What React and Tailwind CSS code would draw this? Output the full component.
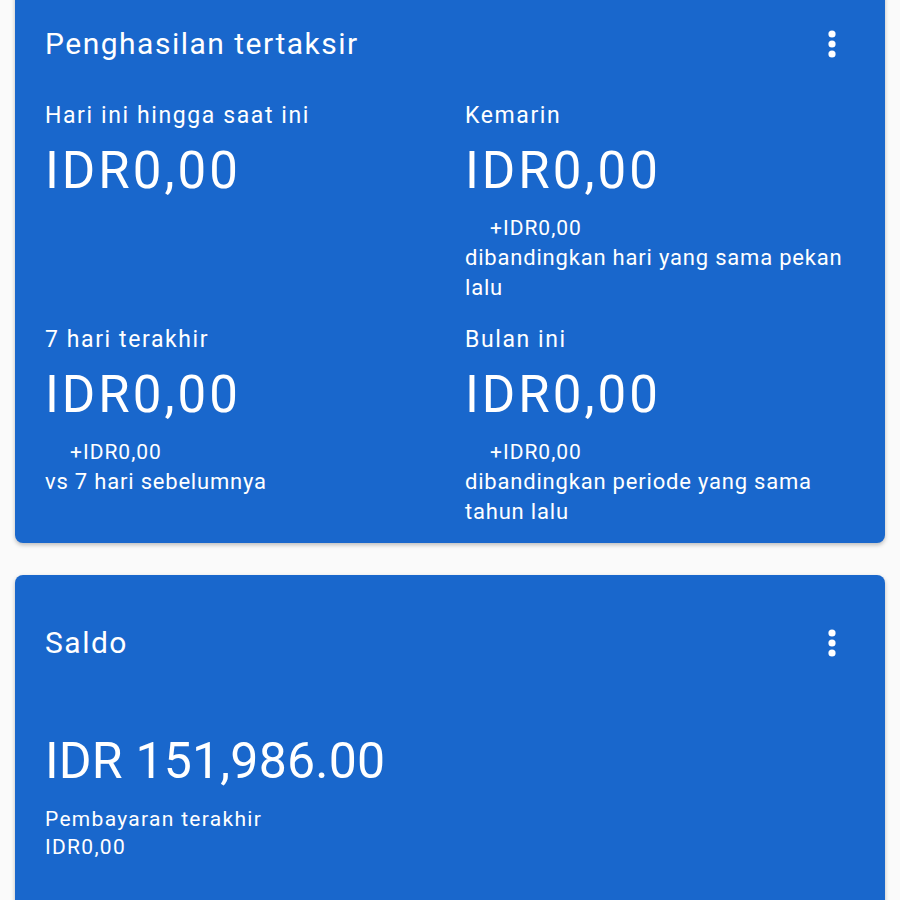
const font = { fontFamily: 'Roboto, "Noto Sans", Arial, sans-serif' }

function Dots() {
  return (
    <svg width="10" height="30" viewBox="0 0 10 30" className="fill-white">
      <circle cx="5" cy="5" r="3.6" />
      <circle cx="5" cy="15" r="3.6" />
      <circle cx="5" cy="25" r="3.6" />
    </svg>
  )
}

function Stat({ label, amount, delta, note }) {
  return (
    <div>
      <div className="text-[23px] leading-[28px] tracking-[1.6px]">{label}</div>
      <div className="mt-[11px] text-[51px] leading-[60px] tracking-[3px]">{amount}</div>
      {delta && (
        <div className="mt-3">
          <div className="pl-[25px] text-[21px] leading-[30px] tracking-[1px]">{delta}</div>
          <div className="text-[22px] leading-[30px] tracking-[0.8px] whitespace-nowrap">
            {note.map(line => <div key={line}>{line}</div>)}
          </div>
        </div>
      )}
    </div>
  )
}

export default function App() {
  return (
    <div className="min-h-[900px] h-[900px] overflow-hidden bg-[#fafafa] px-[15px] text-white" style={font}>
      <div className="-mt-4 rounded-lg bg-[#1967cc] pl-[30px] pr-[48px] pt-[42px] pb-4 shadow-[0_2px_4px_rgba(0,0,0,0.25)]">
        <div className="flex items-center justify-between">
          <h2 className="text-[30px] leading-[36px] tracking-[1.5px]">Penghasilan tertaksir</h2>
          <Dots />
        </div>
        <div className="mt-[40px] grid grid-cols-[420px_1fr] gap-y-[23px]">
          <Stat label="Hari ini hingga saat ini" amount="IDR0,00" />
          <Stat
            label="Kemarin"
            amount="IDR0,00"
            delta="+IDR0,00"
            note={['dibandingkan hari yang sama pekan', 'lalu']}
          />
          <Stat
            label="7 hari terakhir"
            amount="IDR0,00"
            delta="+IDR0,00"
            note={['vs 7 hari sebelumnya']}
          />
          <Stat
            label="Bulan ini"
            amount="IDR0,00"
            delta="+IDR0,00"
            note={['dibandingkan periode yang sama', 'tahun lalu']}
          />
        </div>
      </div>

      <div className="mt-[32px] min-h-[400px] rounded-lg bg-[#1967cc] pl-[30px] pr-[48px] pt-[50px] shadow-[0_2px_4px_rgba(0,0,0,0.25)]">
        <div className="flex items-center justify-between">
          <h2 className="text-[30px] leading-[36px] tracking-[1.5px]">Saldo</h2>
          <Dots />
        </div>
        <div className="mt-[70px] text-[50px] leading-[60px] tracking-[0.2px]">IDR 151,986.00</div>
        <div className="mt-[14px] text-[21px] leading-[28px] tracking-[1.3px]">
          <div>Pembayaran terakhir</div>
          <div>IDR0,00</div>
        </div>
      </div>
    </div>
  )
}
